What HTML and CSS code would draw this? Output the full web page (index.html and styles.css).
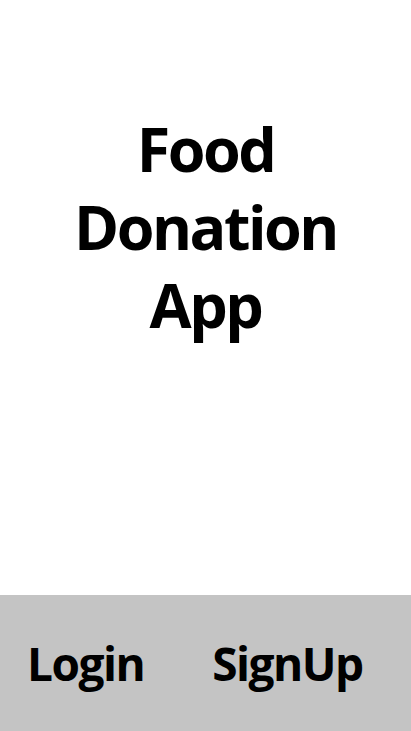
FILE: index.html
```html
<!DOCTYPE html>
<html>
<head>
<meta charset="utf-8">
<link rel="stylesheet" href="styles.css">
</head>
<body>
<div class="screen">
  <main class="hero">
    <h1 class="title">Food<br>Donation<br>App</h1>
  </main>
  <nav class="bar">
    <span class="bar-item">Login</span>
    <span class="bar-item">SignUp</span>
  </nav>
</div>
</body>
</html>
```
FILE: styles.css
```css
html, body {
  margin: 0;
  padding: 0;
  background: #ffffff;
}
.screen {
  width: 411px;
  height: 731px;
  display: flex;
  flex-direction: column;
  font-family: "Open Sans", "DejaVu Sans", sans-serif;
  color: #000;
}
.hero {
  flex: 1;
  padding-top: 110px;
}
.title {
  margin: 0;
  text-align: center;
  font-size: 61px;
  line-height: 78px;
  font-weight: 700;
  letter-spacing: -2.5px;
}
.bar {
  height: 136px;
  background: #c4c4c4;
  display: flex;
  align-items: center;
  padding-left: 27px;
  gap: 68px;
}
.bar-item {
  font-size: 46px;
  font-weight: 700;
  letter-spacing: -1.5px;
}
```
